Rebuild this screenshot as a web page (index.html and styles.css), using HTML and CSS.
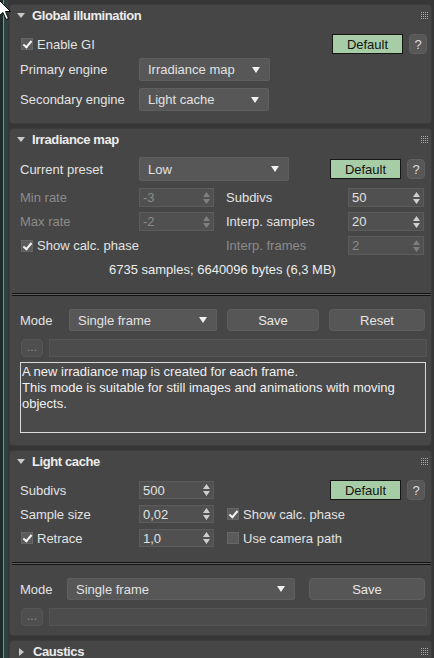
FILE: index.html
```html
<!DOCTYPE html>
<html lang="en">
<head>
  <meta charset="UTF-8" />
  <title>Render Setup - GI</title>
  <link rel="stylesheet" href="styles.css">
</head>
<body>
  <div class="desk-strip"></div>

  <div class="rollouts">

    <!-- Global illumination -->
    <section class="rollout">
      <div class="roll-head">
        <span class="tri-down"></span>
        <span class="roll-title">Global illumination</span>
        <svg class="grip" width="7" height="7" viewBox="0 0 7 7"><path d="M0 0h1v1H0zM2 0h1v1H2zM4 0h1v1H4zM6 0h1v1H6zM0 2h1v1H0zM2 2h1v1H2zM4 2h1v1H4zM6 2h1v1H6zM0 4h1v1H0zM2 4h1v1H2zM4 4h1v1H4zM6 4h1v1H6zM0 6h1v1H0zM2 6h1v1H2zM4 6h1v1H4zM6 6h1v1H6z"/></svg>
      </div>
      <div class="roll-body gi-body">
        <div class="row gi-top">
          <label class="check"><span class="box on"></span>Enable GI</label>
          <div class="btn-pair">
            <button class="btn-default">Default</button>
            <button class="btn-help">?</button>
          </div>
        </div>
        <div class="row engine-row first">
          <span class="field-label">Primary engine</span>
          <div class="dropdown w131"><span>Irradiance map</span><span class="dd-arrow"></span></div>
        </div>
        <div class="row engine-row">
          <span class="field-label">Secondary engine</span>
          <div class="dropdown w130"><span>Light cache</span><span class="dd-arrow"></span></div>
        </div>
      </div>
    </section>

    <!-- Irradiance map -->
    <section class="rollout">
      <div class="roll-head">
        <span class="tri-down"></span>
        <span class="roll-title">Irradiance map</span>
        <svg class="grip" width="7" height="7" viewBox="0 0 7 7"><path d="M0 0h1v1H0zM2 0h1v1H2zM4 0h1v1H4zM6 0h1v1H6zM0 2h1v1H0zM2 2h1v1H2zM4 2h1v1H4zM6 2h1v1H6zM0 4h1v1H0zM2 4h1v1H2zM4 4h1v1H4zM6 4h1v1H6zM0 6h1v1H0zM2 6h1v1H2zM4 6h1v1H4zM6 6h1v1H6z"/></svg>
      </div>
      <div class="roll-body">
        <div class="row preset-row">
          <span class="field-label">Current preset</span>
          <div class="dropdown w150"><span>Low</span><span class="dd-arrow"></span></div>
          <div class="btn-pair">
            <button class="btn-default">Default</button>
            <button class="btn-help">?</button>
          </div>
        </div>

        <div class="param-grid irr-grid">
          <span class="field-label off">Min rate</span>
          <div class="spinner off"><span>-3</span><svg class="spin-arrows" width="7" height="12" viewBox="0 0 7 12"><path d="M3.5 0L7 5H0zM0 7h7l-3.5 5z"/></svg></div>
          <span></span>
          <span class="field-label">Subdivs</span>
          <div class="spinner"><span>50</span><svg class="spin-arrows" width="7" height="12" viewBox="0 0 7 12"><path d="M3.5 0L7 5H0zM0 7h7l-3.5 5z"/></svg></div>

          <span class="field-label off">Max rate</span>
          <div class="spinner off"><span>-2</span><svg class="spin-arrows" width="7" height="12" viewBox="0 0 7 12"><path d="M3.5 0L7 5H0zM0 7h7l-3.5 5z"/></svg></div>
          <span></span>
          <span class="field-label">Interp. samples</span>
          <div class="spinner"><span>20</span><svg class="spin-arrows" width="7" height="12" viewBox="0 0 7 12"><path d="M3.5 0L7 5H0zM0 7h7l-3.5 5z"/></svg></div>

          <label class="check span2"><span class="box on"></span>Show calc. phase</label>
          <span></span>
          <span class="field-label off">Interp. frames</span>
          <div class="spinner off"><span>2</span><svg class="spin-arrows" width="7" height="12" viewBox="0 0 7 12"><path d="M3.5 0L7 5H0zM0 7h7l-3.5 5z"/></svg></div>
        </div>

        <div class="info-line">6735 samples; 6640096 bytes (6,3 MB)</div>

        <div class="sep"></div>

        <div class="row mode-row">
          <span class="mode-label">Mode</span>
          <div class="dropdown w148"><span>Single frame</span><span class="dd-arrow"></span></div>
          <button class="btn w92">Save</button>
          <button class="btn w96">Reset</button>
        </div>
        <div class="row path-row">
          <button class="btn-dots">...</button>
          <div class="path-field"></div>
        </div>
        <div class="desc-box">A new irradiance map is created for each frame.<br>This mode is suitable for still images and animations with moving objects.</div>
      </div>
    </section>

    <!-- Light cache -->
    <section class="rollout">
      <div class="roll-head">
        <span class="tri-down"></span>
        <span class="roll-title">Light cache</span>
        <svg class="grip" width="7" height="7" viewBox="0 0 7 7"><path d="M0 0h1v1H0zM2 0h1v1H2zM4 0h1v1H4zM6 0h1v1H6zM0 2h1v1H0zM2 2h1v1H2zM4 2h1v1H4zM6 2h1v1H6zM0 4h1v1H0zM2 4h1v1H2zM4 4h1v1H4zM6 4h1v1H6zM0 6h1v1H0zM2 6h1v1H2zM4 6h1v1H4zM6 6h1v1H6z"/></svg>
      </div>
      <div class="roll-body lc-body">
        <div class="param-grid lc-grid">
          <span class="field-label">Subdivs</span>
          <div class="spinner"><span>500</span><svg class="spin-arrows" width="7" height="12" viewBox="0 0 7 12"><path d="M3.5 0L7 5H0zM0 7h7l-3.5 5z"/></svg></div>
          <span></span>
          <div class="btn-pair span2 lc-btns">
            <button class="btn-default">Default</button>
            <button class="btn-help">?</button>
          </div>

          <span class="field-label">Sample size</span>
          <div class="spinner"><span>0,02</span><svg class="spin-arrows" width="7" height="12" viewBox="0 0 7 12"><path d="M3.5 0L7 5H0zM0 7h7l-3.5 5z"/></svg></div>
          <span></span>
          <label class="check span2"><span class="box on"></span>Show calc. phase</label>

          <label class="check"><span class="box on"></span>Retrace</label>
          <div class="spinner"><span>1,0</span><svg class="spin-arrows" width="7" height="12" viewBox="0 0 7 12"><path d="M3.5 0L7 5H0zM0 7h7l-3.5 5z"/></svg></div>
          <span></span>
          <label class="check span2"><span class="box"></span>Use camera path</label>
        </div>

        <div class="sep"></div>

        <div class="row mode-row">
          <span class="mode-label lc">Mode</span>
          <div class="dropdown w228"><span>Single frame</span><span class="dd-arrow"></span></div>
          <button class="btn w116">Save</button>
        </div>
        <div class="row path-row">
          <button class="btn-dots">...</button>
          <div class="path-field"></div>
        </div>
      </div>
    </section>

    <!-- Caustics (collapsed) -->
    <section class="rollout">
      <div class="roll-head">
        <span class="tri-right"></span>
        <span class="roll-title">Caustics</span>
        <svg class="grip" width="7" height="7" viewBox="0 0 7 7"><path d="M0 0h1v1H0zM2 0h1v1H2zM4 0h1v1H4zM6 0h1v1H6zM0 2h1v1H0zM2 2h1v1H2zM4 2h1v1H4zM6 2h1v1H6zM0 4h1v1H0zM2 4h1v1H2zM4 4h1v1H4zM6 4h1v1H6zM0 6h1v1H0zM2 6h1v1H2zM4 6h1v1H4zM6 6h1v1H6z"/></svg>
      </div>
    </section>
  </div>

  <!-- mouse pointer -->
  <svg class="cursor" width="13" height="22" viewBox="0 0 13 22"><path d="M1 1L1 17L5 13.5L8 20.5L10.5 19.5L7.5 12.5L12.5 12.5Z" fill="#fff" stroke="#000" stroke-width="1"/></svg>
</body>
</html>
```

FILE: styles.css
```css
* {
  box-sizing: border-box;
}

body {
  margin: 0;
  height: 658px;
  overflow: hidden;
  display: flex;
  background: #363636;
  font-family: "Liberation Sans", Arial, sans-serif;
  font-size: 13px;
  color: #e2e2e2;
}

.desk-strip {
  width: 8px;
  flex: none;
  background: linear-gradient(90deg, #1d2a2a 0 3px, #4aa89d 3px 4px, #2c4341 4px 8px);
}

.rollouts {
  flex: 1;
  display: flex;
  flex-direction: column;
  gap: 4px;
  padding: 4px 2px 0 1px;
}

.rollout {
  flex: none;
  background: #464646;
  border: 1px solid #3c3c3c;
  border-radius: 4px;
}

.roll-head {
  height: 21px;
  display: flex;
  align-items: center;
  padding: 0 3px 0 7px;
}

.tri-down {
  width: 0;
  height: 0;
  border-left: 4px solid transparent;
  border-right: 4px solid transparent;
  border-top: 5px solid #c9c9c9;
  margin-right: 7px;
}

.tri-right {
  width: 0;
  height: 0;
  border-top: 4px solid transparent;
  border-bottom: 4px solid transparent;
  border-left: 5px solid #c9c9c9;
  margin: 0 9px 0 2px;
}

.roll-title {
  font-weight: bold;
  letter-spacing: -0.4px;
  color: #ececec;
  flex: 1;
}

.grip {
  fill: #a8a8a8;
}

.roll-body {
  padding: 0 6px 12px 10px;
}

.gi-body {
  padding-right: 4px;
}

.lc-body {
  padding-bottom: 9px;
}

.row {
  display: flex;
  align-items: center;
}

.gi-top {
  height: 20px;
  margin-top: 8px;
  justify-content: space-between;
}

.engine-row {
  height: 23px;
  margin-top: 7px;
}

.engine-row.first {
  margin-top: 4px;
}

.field-label {
  width: 119px;
  flex: none;
  white-space: nowrap;
}

.field-label.off {
  color: #8b8b8b;
}

.check {
  display: flex;
  align-items: center;
  white-space: nowrap;
  padding-left: 1px;
}

.box {
  width: 12px;
  height: 12px;
  margin-right: 4px;
  background: #5b5b5b;
  border: 1px solid #666;
  position: relative;
}

.box.on::after {
  content: "";
  position: absolute;
  left: 3px;
  top: 0px;
  width: 3px;
  height: 7px;
  border: solid #f4f4f4;
  border-width: 0 2px 2px 0;
  transform: rotate(40deg);
}

.dropdown {
  height: 23px;
  display: flex;
  align-items: center;
  justify-content: space-between;
  padding: 0 9px 0 8px;
  background: #575757;
  border: 1px solid #5e5e5e;
  border-radius: 2px;
  white-space: nowrap;
}

.w131 { width: 131px; }
.w130 { width: 130px; }
.w150 { width: 150px; height: 24px; }
.w148 { width: 148px; height: 22px; }
.w228 { width: 228px; height: 22px; }

.dd-arrow {
  width: 0;
  height: 0;
  border-left: 4px solid transparent;
  border-right: 4px solid transparent;
  border-top: 6px solid #f0f0f0;
}

.btn-pair {
  display: flex;
  align-items: center;
  gap: 6px;
}

.btn-default {
  width: 71px;
  height: 20px;
  padding: 0;
  background: #a7cda6;
  border: 1px solid #161616;
  color: #141414;
  font: 13px "Liberation Sans", Arial, sans-serif;
}

.btn-help {
  width: 18px;
  height: 20px;
  padding: 0;
  background: #575757;
  border: 1px solid #5f5f5f;
  border-radius: 4px;
  color: #dedede;
  font: 13px "Liberation Sans", Arial, sans-serif;
}

.preset-row {
  height: 24px;
  margin-top: 7px;
}

.preset-row .btn-pair {
  margin-left: auto;
}

.param-grid {
  display: grid;
  grid-template-columns: 119px 75px 12px 122px 76px;
  align-items: center;
}

.irr-grid {
  margin-top: 7px;
  grid-auto-rows: 19px;
  row-gap: 5px;
}

.lc-grid {
  margin-top: 9px;
  grid-auto-rows: 18px;
  row-gap: 6px;
}

.span2 {
  grid-column: span 2;
}

.lc-btns {
  justify-self: end;
  margin-right: -1px;
}

.spinner {
  height: 100%;
  display: flex;
  align-items: center;
  justify-content: space-between;
  padding: 0 3px 0 3px;
  background: #505050;
  border: 1px solid #5c5c5c;
}

.spinner.off {
  color: #8b8b8b;
}

.spin-arrows {
  fill: #cfcfcf;
}

.spinner.off .spin-arrows {
  fill: #7e7e7e;
}

.info-line {
  height: 16px;
  line-height: 16px;
  margin-top: 7px;
  text-align: center;
  color: #ececec;
}

.sep {
  height: 3px;
  margin: 15px -6px 0 -8px;
  background: #5a5a5a;
  border-top: 1px solid #141414;
  border-bottom: 1px solid #141414;
}

.mode-row {
  height: 22px;
  margin-top: 13px;
}

.mode-label {
  width: 49px;
  flex: none;
}

.mode-label.lc {
  width: 47px;
}

.btn {
  height: 22px;
  padding: 0;
  background: #565656;
  border: 1px solid #5e5e5e;
  border-radius: 4px;
  color: #e6e6e6;
  font: 13px "Liberation Sans", Arial, sans-serif;
}

.w92 { width: 92px; margin-left: 10px; }
.w96 { width: 96px; margin-left: 10px; }
.w116 { width: 116px; margin-left: 14px; }

.path-row {
  height: 18px;
  margin-top: 8px;
}

.btn-dots {
  width: 22px;
  height: 18px;
  padding: 0 0 3px;
  margin-left: 1px;
  background: #4e4e4e;
  border: 1px solid #555;
  border-radius: 4px;
  color: #8c8c8c;
  font: 12px "Liberation Sans", Arial, sans-serif;
}

.path-field {
  flex: 1;
  height: 18px;
  margin: 0 -2px 0 6px;
  background: #4c4c4c;
  border: 1px solid #545454;
}

.desc-box {
  height: 71px;
  margin-top: 5px;
  margin-right: -1px;
  padding: 1px 1px;
  line-height: 16px;
  background: #4a4a4a;
  border: 1px solid #dadada;
  color: #f0f0f0;
}

.cursor {
  position: absolute;
  left: -2px;
  top: -1px;
}
```
